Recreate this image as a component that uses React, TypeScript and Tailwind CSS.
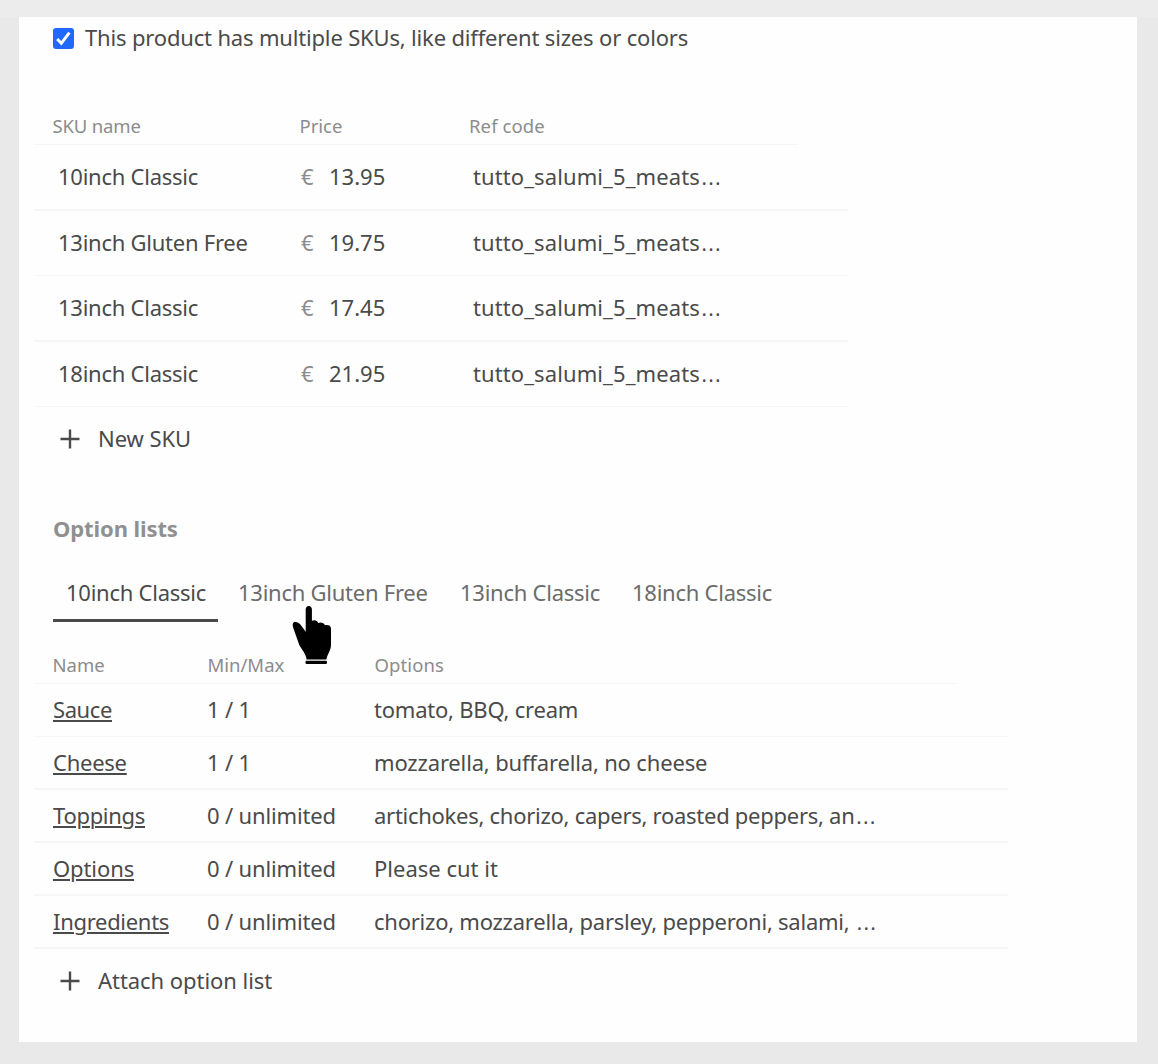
type Text = { text: string; tracking: string };

const skus = [
  { name: "10inch Classic", price: "13.95", line: "h-[66px] border-b-2" },
  { name: "13inch Gluten Free", price: "19.75", line: "h-[65px] border-b" },
  { name: "13inch Classic", price: "17.45", line: "h-[66px] border-b-2" },
  { name: "18inch Classic", price: "21.95", line: "h-[65px] border-b" },
];

const optionLists: {
  name: Text;
  range: string;
  options: Text;
  more?: boolean;
  line: string;
}[] = [
  {
    name: { text: "Sauce", tracking: "tracking-[-0.4px]" },
    range: "1 / 1",
    options: { text: "tomato, BBQ, cream", tracking: "tracking-[-0.22px]" },
    line: "h-[53px] border-b pb-px",
  },
  {
    name: { text: "Cheese", tracking: "tracking-[-0.25px]" },
    range: "1 / 1",
    options: { text: "mozzarella, buffarella, no cheese", tracking: "tracking-[-0.16px]" },
    line: "h-[53px] border-b-2",
  },
  {
    name: { text: "Toppings", tracking: "tracking-[-0.3px]" },
    range: "0 / unlimited",
    options: { text: "artichokes, chorizo, capers, roasted peppers, an", tracking: "tracking-[-0.27px]" },
    more: true,
    line: "h-[53px] border-b-2",
  },
  {
    name: { text: "Options", tracking: "tracking-[-0.1px]" },
    range: "0 / unlimited",
    options: { text: "Please cut it", tracking: "tracking-normal" },
    line: "h-[53px] border-b-2",
  },
  {
    name: { text: "Ingredients", tracking: "tracking-[-0.3px]" },
    range: "0 / unlimited",
    options: { text: "chorizo, mozzarella, parsley, pepperoni, salami, ", tracking: "tracking-[-0.24px]" },
    more: true,
    line: "h-[53px] border-b-2",
  },
];

function Ellipsis() {
  return <span className="ml-px text-[28px] font-normal leading-none tracking-normal [font-weight:350]">…</span>;
}

function AddButton({ label }: { label: string }) {
  return (
    <button className="ml-[26px] flex h-8 items-center gap-[18px]">
      <svg width="20" height="20" viewBox="0 0 20 20" className="mt-[2px]">
        <path d="M10 0.5V19.5M0.5 10H19.5" stroke="#4a4a4a" strokeWidth="2.4" />
      </svg>
      <span className="tracking-[-0.05px]">{label}</span>
    </button>
  );
}

function HandPointer() {
  return (
    <svg
      width="42"
      height="62"
      viewBox="292 604 42 62"
      className="pointer-events-none absolute left-[54px] top-[33px]"
    >
      <path
        d="M305.700 609.200c0-1.900 1.300-3.200 3.100-3.200s3.100 1.300 3.100 3.200V620.800c2.800-1.300 5.400-.3 6.300 2.200 2.700-1.200 5.700-.3 6.700 2.300 3-.7 6.100.4 6.100 3.200V645c0 5.500-3.700 9-4.600 14.600H306.600c-.4-5.500-4.700-9.600-7.300-14.600l-6.100-17.300c-1-3-.5-5.100 1.100-5.600 2.300-.7 4.800.8 6.300 2.700l5.100 6.900z"
        fill="#000"
      />
      <rect x="305.500" y="660.800" width="21.500" height="3.200" rx="1.200" fill="#000" />
    </svg>
  );
}

export default function App() {
  return (
    <div className="h-[1064px] w-[1158px] overflow-hidden whitespace-nowrap bg-[#e9e9e9] font-['Noto_Sans',sans-serif] text-[22px] leading-8 text-[#4a4a4a]">
      <div className="h-[17px] bg-[#ececec]" />
      <main className="ml-[19px] h-[1025px] w-[1118px] bg-[#fefefe]">
        <label className="flex h-[42px] items-center gap-[11px] pl-[34px]">
          <span className="flex size-[21px] items-center justify-center rounded-[3px] bg-[#1f69ff]">
            <svg width="21" height="21" viewBox="0 0 21 21">
              <path d="M4.200 11L8.300 15.300L16.400 4.600" fill="none" stroke="#fff" strokeWidth="3" />
            </svg>
          </span>
          <span className="-mt-[3px] tracking-[-0.17px]">
            This product has multiple SKUs, like different sizes or colors
          </span>
        </label>

        <section className="ml-[15px] mt-[49px] w-[814px]">
          <div className="flex h-[37px] w-[764px] items-center border-b border-[#f5f5f5] pl-[18.500px] text-[18.5px] text-[#8c8c8c]">
            <span className="w-[247px] tracking-[-0.15px]">SKU name</span>
            <span className="w-[169.500px]">Price</span>
            <span className="tracking-[0.1px]">Ref code</span>
          </div>
          {skus.map((sku) => (
            <div key={sku.name} className={`flex items-center border-[#f6f6f6] pb-0.5 pl-6 ${sku.line}`}>
              <span className="w-[243px] tracking-[-0.25px]">{sku.name}</span>
              <span className="w-[28px] text-[#8c8c8c]">€</span>
              <span className="w-[144px]">{sku.price}</span>
              <span className="tracking-[0.1px]">
                tutto_salumi_5_meats
                <Ellipsis />
              </span>
            </div>
          ))}
          <div className="pt-[15px]">
            <AddButton label="New SKU" />
          </div>
        </section>

        <h2 className="ml-[34px] mt-[58px] font-bold tracking-[-0.1px] text-[#909090]">Option lists</h2>

        <nav className="ml-[34px] mt-[27px] flex h-[51px] text-[#6c6c6c]">
          <a className="w-[165px] border-b-[3px] border-[#4a4a4a] pl-[13px] pt-[5px] tracking-[-0.25px] text-[#4a4a4a]">
            10inch Classic
          </a>
          <a className="relative ml-5 w-[222px] pt-[5px] tracking-[-0.25px]">
            13inch Gluten Free
            <HandPointer />
          </a>
          <a className="w-[172px] pt-[5px] tracking-[-0.25px]">13inch Classic</a>
          <a className="pt-[5px] tracking-[-0.25px]">18inch Classic</a>
        </nav>

        <section className="ml-[15px] mt-[25px] w-[974px]">
          <div className="flex h-[37px] w-[923px] items-center border-b border-[#f5f5f5] pl-[18.500px] text-[18.5px] text-[#8c8c8c]">
            <span className="w-[155px]">Name</span>
            <span className="w-[167px]">Min/Max</span>
            <span className="tracking-[0.1px]">Options</span>
          </div>
          {optionLists.map((list) => (
            <div key={list.name.text} className={`flex items-center border-[#f6f6f6] pl-[19px] ${list.line}`}>
              <span className="-mt-0.5 w-[154px]">
                <a className={`underline decoration-2 underline-offset-2 ${list.name.tracking}`}>
                  {list.name.text}
                </a>
              </span>
              <span className="-mt-0.5 w-[167px] tracking-[-0.15px]">{list.range}</span>
              <span className={`-mt-0.5 whitespace-pre ${list.options.tracking}`}>
                {list.options.text}
                {list.more && <Ellipsis />}
              </span>
            </div>
          ))}
          <div className="pt-[15px]">
            <AddButton label="Attach option list" />
          </div>
        </section>
      </main>
    </div>
  );
}
